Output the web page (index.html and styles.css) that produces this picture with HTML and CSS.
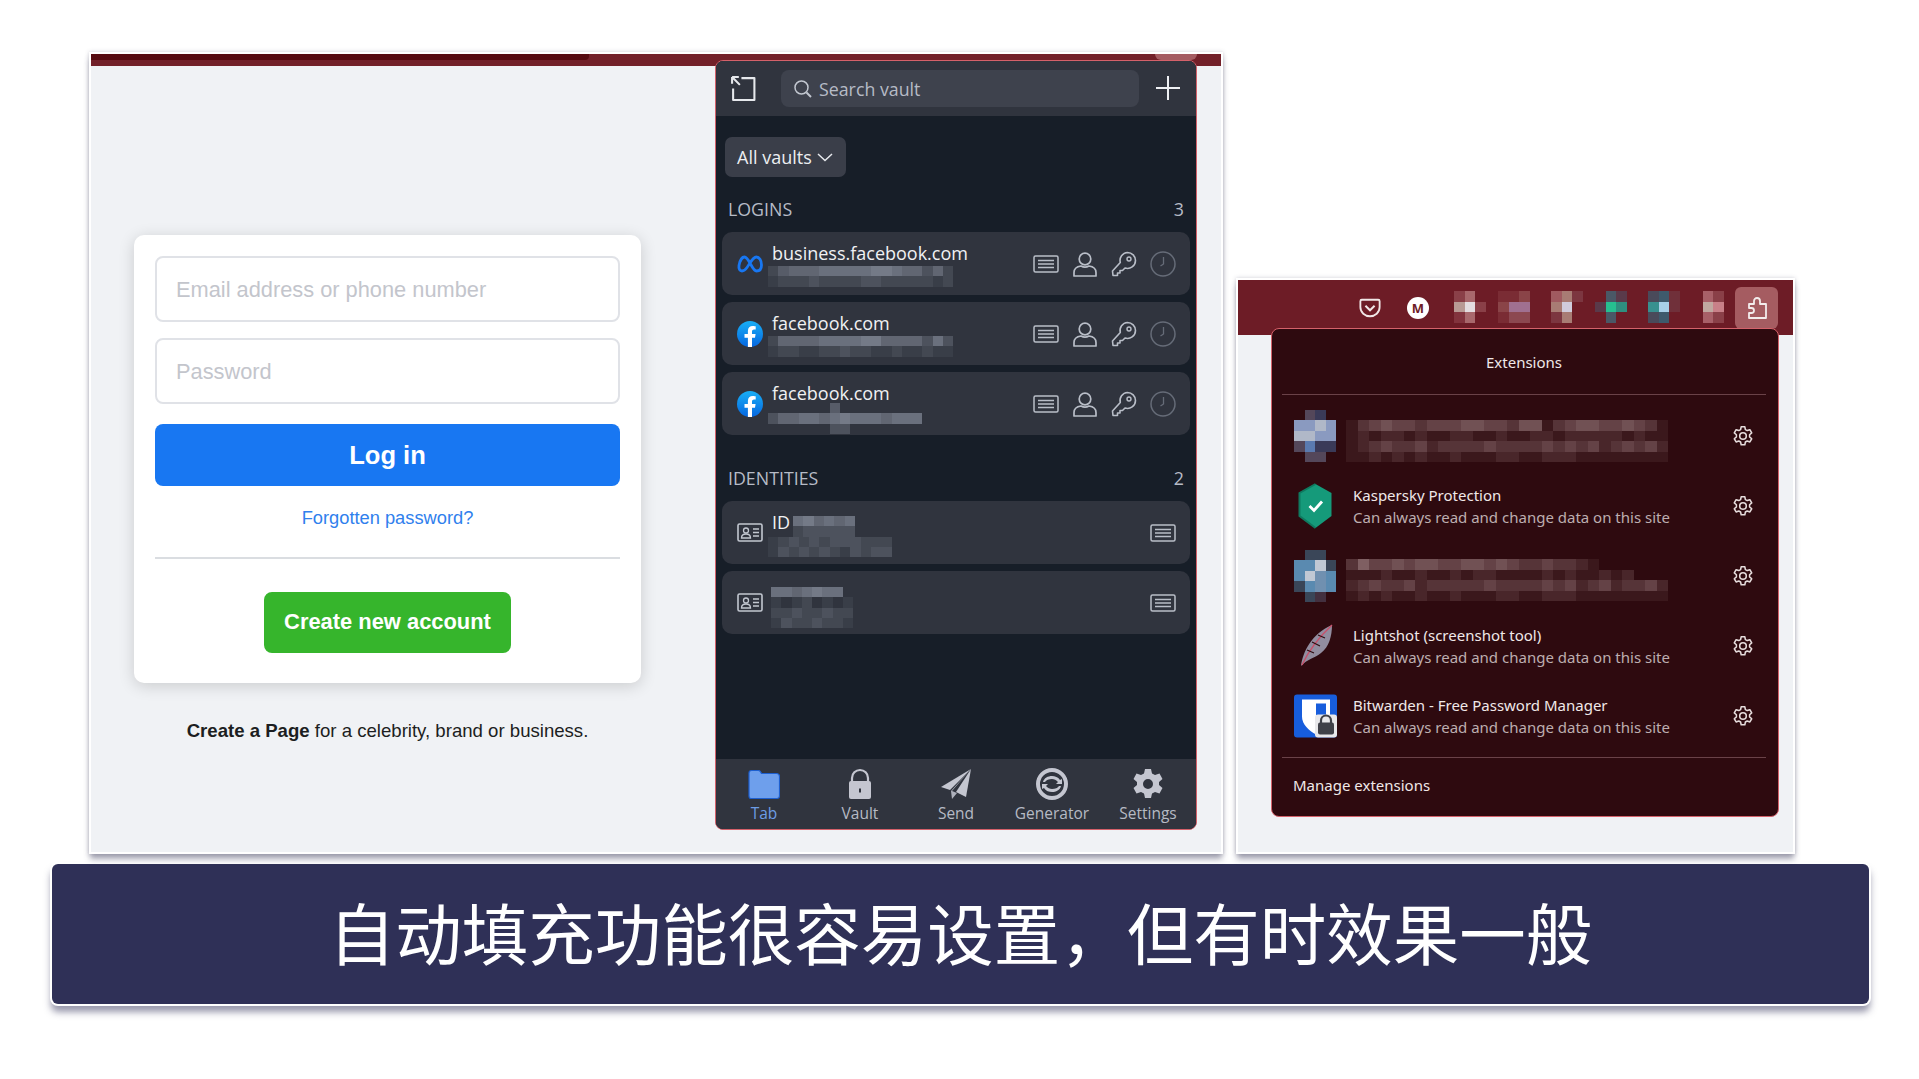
FILE: index.html
```html
<!DOCTYPE html>
<html lang="zh-CN">
<head>
    <meta charset="UTF-8">
    <meta name="viewport" content="width=device-width, initial-scale=1.0">
    <title>自动填充功能很容易设置&#xFF0C;但有时效果一般</title>
    <link rel="stylesheet" href="styles.css">
</head>
<body>
    <svg class="icon-defs" width="0" height="0" aria-hidden="true">
        <symbol id="i-view" viewBox="0 0 26 18"><rect x="1" y="1" width="24" height="16" rx="1.5" fill="none" stroke="currentColor" stroke-width="1.5"/><path d="M5 5.5h16M5 9h16M5 12.500h16" stroke="currentColor" stroke-width="1.300"/></symbol>
        <symbol id="i-user" viewBox="0 0 26 26"><circle cx="13" cy="8" r="5.800" fill="none" stroke="currentColor" stroke-width="1.700"/><path d="M2 25v-3.500c0-4 3.500-6 7-6.500 2.500 1.500 5.500 1.500 8 0 3.500.5 7 2.500 7 6.500V25z" fill="none" stroke="currentColor" stroke-width="1.700" stroke-linejoin="round"/></symbol>
        <symbol id="i-key" viewBox="0 0 26 26"><path d="M16.500 1.500a8 8 0 0 1 8 8 8 8 0 0 1-10.500 7.500l-2.500 2.500H9v2.500H6.500V24.500H2L1.500 20 9.300 11.500a8 8 0 0 1 7.200-10z" fill="none" stroke="currentColor" stroke-width="1.600" stroke-linejoin="round"/><circle cx="18" cy="8" r="2" fill="none" stroke="currentColor" stroke-width="1.400"/></symbol>
        <symbol id="i-clock" viewBox="0 0 26 26"><circle cx="13" cy="13" r="12" fill="none" stroke="currentColor" stroke-width="1.500"/><path d="M13.500 6v7l-3 2" fill="none" stroke="currentColor" stroke-width="1.300"/></symbol>
        <symbol id="i-id" viewBox="0 0 26 20"><rect x="1" y="1" width="24" height="17" rx="1.500" fill="none" stroke="currentColor" stroke-width="1.600"/><circle cx="9" cy="7.500" r="2.500" fill="none" stroke="currentColor" stroke-width="1.300"/><path d="M4.500 15c0-3 2-4 4.500-4s4.500 1 4.500 4zM16 6h6M16 9.500h6M16 13h6" fill="none" stroke="currentColor" stroke-width="1.300"/></symbol>
        <symbol id="i-fb" viewBox="0 0 26 26"><circle cx="13" cy="13" r="13" fill="url(#fb-blue)"/><path d="M18 16.800l.6-3.800h-3.600v-2.500c0-1 .5-2 2.100-2h1.600V5.300s-1.500-.3-2.900-.3c-3 0-4.900 1.800-4.900 5v3H7.500v3.800h3.400V26h4.100v-9.200z" fill="#fff"/></symbol>
        <symbol id="i-gear" viewBox="0 0 24 24"><path d="M10 2h4l.6 3 2 1.100 2.900-1 2 3.500-2.300 2 0 2.400 2.300 2-2 3.500-2.900-1-2 1.100-.6 3h-4l-.6-3-2-1.100-2.900 1-2-3.500 2.300-2 0-2.400-2.300-2 2-3.500 2.900 1 2-1.100z" fill="none" stroke="currentColor" stroke-width="1.700" stroke-linejoin="round"/><circle cx="12" cy="12" r="3.600" fill="none" stroke="currentColor" stroke-width="1.700"/></symbol>
        <linearGradient id="fb-blue" x1="0" y1="0" x2="0" y2="1"><stop offset="0" stop-color="#19aff5"/><stop offset="1" stop-color="#0566e0"/></linearGradient>
    </svg>

    <div class="shots">
        <!-- Fenêtre de gauche : page de connexion et coffre -->
        <section class="window window-login">
            <div class="tabstrip"><div class="tab-dark"></div><div class="tab-btn"></div></div>
            <div class="login-col">
                <div class="login-card">
                    <div class="field">Email address or phone number</div>
                    <div class="field">Password</div>
                    <div class="login-btn">Log in</div>
                    <div class="forgot">Forgotten password?</div>
                    <div class="login-sep"></div>
                    <div class="create-btn">Create new account</div>
                </div>
                <p class="create-page"><b>Create a Page</b> for a celebrity, brand or business.</p>
            </div>

            <div class="vault">
                <div class="vault-top">
                    <svg class="top-icon" viewBox="0 0 26 26"><path d="M11 3h12.500v21H3V13" fill="none" stroke="#e6e8ec" stroke-width="2" stroke-linejoin="round"/><path d="M2 2h6.500M2 2v6.500M2.500 2.500l7 7" fill="none" stroke="#e6e8ec" stroke-width="2"/></svg>
                    <div class="search">
                        <svg class="search-icon" viewBox="0 0 20 20"><circle cx="8.500" cy="8.500" r="6.500" fill="none" stroke="#c2c7d0" stroke-width="1.500"/><path d="M13.500 13.500l4.500 4.500" stroke="#c2c7d0" stroke-width="2"/></svg>
                        <span>Search vault</span>
                    </div>
                    <svg class="top-plus" viewBox="0 0 26 26"><path d="M13 1v24M1 13h24" stroke="#eef0f3" stroke-width="2"/></svg>
                </div>

                <div class="vault-body">
                    <div class="vault-filter">All vaults <svg viewBox="0 0 16 9"><path d="M1 1l7 6.500L15 1" fill="none" stroke="#e6e8ec" stroke-width="1.500"/></svg></div>

                    <div class="group-head"><span>LOGINS</span><span>3</span></div>
                    <div class="item">
                        <svg class="item-icon" viewBox="0 0 26 26"><path d="M2 14.500C3 9 5.500 6 7.500 6c4.500 0 7.500 14 12 14 2.800 0 5-2 5-6 0-4.500-2.200-8-5.200-8-3.500 0-6.800 7-9.300 10.500-1.500 2.200-3 3.500-5 3.500-2.200 0-3.500-2-3-5.500z" fill="none" stroke="#1877f2" stroke-width="2.800"/></svg>
                        <div class="item-text">
                            <div class="item-title">business.facebook.com</div>
                            <div class="mosaic mosaic-line" data-rows="245556666677655352|122232222332222212"></div>
                        </div>
                        <div class="item-actions">
                            <svg class="act"><use href="#i-view"/></svg>
                            <svg class="act"><use href="#i-user"/></svg>
                            <svg class="act"><use href="#i-key"/></svg>
                            <svg class="act act-dim"><use href="#i-clock"/></svg>
                        </div>
                    </div>
                    <div class="item">
                        <svg class="item-icon"><use href="#i-fb"/></svg>
                        <div class="item-text">
                            <div class="item-title">facebook.com</div>
                            <div class="mosaic mosaic-line" data-rows="255556666775555363|122112232211211211"></div>
                        </div>
                        <div class="item-actions">
                            <svg class="act"><use href="#i-view"/></svg>
                            <svg class="act"><use href="#i-user"/></svg>
                            <svg class="act"><use href="#i-key"/></svg>
                            <svg class="act act-dim"><use href="#i-clock"/></svg>
                        </div>
                    </div>
                    <div class="item">
                        <svg class="item-icon"><use href="#i-fb"/></svg>
                        <div class="item-text">
                            <div class="item-title">facebook.com</div>
                            <div class="mosaic mosaic-line mosaic-low" data-rows="      4|355665676665666|      33"></div>
                        </div>
                        <div class="item-actions">
                            <svg class="act"><use href="#i-view"/></svg>
                            <svg class="act"><use href="#i-user"/></svg>
                            <svg class="act"><use href="#i-key"/></svg>
                            <svg class="act act-dim"><use href="#i-clock"/></svg>
                        </div>
                    </div>

                    <div class="group-head group-second"><span>IDENTITIES</span><span>2</span></div>
                    <div class="item">
                        <svg class="item-icon item-icon-id"><use href="#i-id"/></svg>
                        <div class="item-text">
                            <div class="id-line">
                                <span class="item-title">ID</span>
                                <div class="mosaic mosaic-line mosaic-id" data-rows="675656|233333"></div>
                            </div>
                            <div class="mosaic mosaic-line" data-rows="123232333222|132323213233"></div>
                        </div>
                        <div class="item-actions"><svg class="act"><use href="#i-view"/></svg></div>
                    </div>
                    <div class="item">
                        <svg class="item-icon item-icon-id"><use href="#i-id"/></svg>
                        <div class="item-text">
                            <div class="mosaic mosaic-line mosaic-solo" data-rows="6656766|1 12 1 1|22322322|13223221"></div>
                        </div>
                        <div class="item-actions"><svg class="act"><use href="#i-view"/></svg></div>
                    </div>
                </div>

                <nav class="vault-nav">
                    <div class="nav-item nav-active">
                        <svg viewBox="0 0 32 30"><path d="M1 27V4c0-1.500.8-2.500 2.500-2.500h7c1.500 0 2 .5 3 3h15c1.800 0 3 1 3 3V27c0 1.500-1 2.500-2.500 2.500h-26C1.800 29.500 1 28.500 1 27z" fill="#6e9fec" stroke="#1d5fd0" stroke-width="1.200"/></svg>
                        <span>Tab</span>
                    </div>
                    <div class="nav-item">
                        <svg viewBox="0 0 32 32"><path d="M8 14V10a8 8 0 0 1 16 0v4" fill="none" stroke="#c4c6d0" stroke-width="2.200"/><rect x="5" y="13" width="22" height="18" rx="2" fill="#c4c6d0"/><path d="M16 20.500v4" stroke="#30343e" stroke-width="2"/></svg>
                        <span>Vault</span>
                    </div>
                    <div class="nav-item">
                        <svg viewBox="0 0 32 32"><path d="M31 1L1 19l9 3z" fill="#c4c6d0"/><path d="M31 1L12 23l5 2-5 6-1-8z" fill="#aeb1bc"/><path d="M31 1l-5 28-10-5z" fill="#c4c6d0"/></svg>
                        <span>Send</span>
                    </div>
                    <div class="nav-item">
                        <svg viewBox="0 0 32 32"><circle cx="16" cy="16" r="14" fill="none" stroke="#c4c6d0" stroke-width="4"/><path d="M7 14c1-4 5-6 9-6 3 0 6 1 8 4l2-1v5h-6l2-2c-1.500-2-4-3-6-3-3 0-6 1-7 3zM25 18c-1 4-5 6-9 6-3 0-6-1-8-4l-2 1v-5h6l-2 2c1.500 2 4 3 6 3 3 0 6-1 7-3z" fill="#c4c6d0"/></svg>
                        <span>Generator</span>
                    </div>
                    <div class="nav-item">
                        <svg viewBox="0 0 32 32"><path fill-rule="evenodd" d="M13 1h6l1 4.500 3 1.500 4.500-1.500 3 5.500-3.500 3v3l3.500 3-3 5.500-4.500-1.500-3 1.500-1 4.500h-6l-1-4.500-3-1.500-4.500 1.500-3-5.500 3.500-3v-3l-3.500-3 3-5.500L9 7l3-1.500zM16 11a5 5 0 1 0 0 10 5 5 0 0 0 0-10z" fill="#c4c6d0"/></svg>
                        <span>Settings</span>
                    </div>
                </nav>
            </div>
        </section>

        <!-- Fenêtre de droite : menu des extensions -->
        <section class="window window-ext">
            <div class="toolbar">
                <svg class="tool-icon" viewBox="0 0 24 24"><path d="M3 3h18c1 0 1.500.5 1.500 1.500V11c0 6-5 10-10.500 10S1.500 17 1.500 11V4.500C1.500 3.500 2 3 3 3z" fill="none" stroke="#f0e6e6" stroke-width="2"/><path d="M7 9.500l5 5 5-5" fill="none" stroke="#f0e6e6" stroke-width="2.200"/></svg>
                <div class="tool-m">M</div>
                <div class="mosaic mosaic-tool tool-first" data-colors="#8a4048,#a8686c,#b89a94,#e4dde0,#82333d" data-rows="ab |cda|eb "></div>
                <div class="mosaic mosaic-tool tool-near" data-colors="#7a2c34,#8a4448,#a07090,#a07088,#8c4850" data-rows="aab|bcc|aee"></div>
                <div class="mosaic mosaic-tool tool-far" data-colors="#a05a60,#a87c74,#d0ccdc,#c8a8a8,#7c3640" data-rows="abe|bc |eb "></div>
                <div class="mosaic mosaic-tool tool-near" data-colors="#7c3a46,#4a5866,#26c090,#2f8f7f,#5a3a4a" data-rows=" be|ecd| b "></div>
                <div class="mosaic mosaic-tool tool-far" data-colors="#4a4a5a,#3e5a6c,#a8d0e8,#38908f,#70303a" data-rows="abe|dce|ab "></div>
                <div class="mosaic mosaic-tool tool-near" data-colors="#a86068,#c0a8a0,#c88088,#8a4048" data-rows=" ad| bc| ad"></div>
                <div class="tool-puzzle">
                    <svg viewBox="0 0 24 24"><path d="M4 8h5V5a3 3 0 0 1 6 0v3h6v14H4v-5h2.500a2.500 2.500 0 0 0 0-5H4z" fill="none" stroke="#f3ecec" stroke-width="1.800" stroke-linejoin="round"/></svg>
                </div>
            </div>

            <div class="ext-menu">
                <div class="ext-title">Extensions</div>
                <div class="ext-sep"></div>
                <div class="ext-row">
                    <div class="mosaic mosaic-icon" data-colors="#54475a,#3a3a58,#8a9ac0,#b0b8c8,#5a7ab0,#4a5a80" data-rows=" ab |ccdc|ddcc|aebb| aa"></div>
                    <div class="mosaic mosaic-text" data-tint="226,200,200" data-rows="1345443444554435513455445431|1212212112211211221222221211|1234334233334333343434234342|1121212112111221122211111111"></div>
                    <svg class="ext-gear"><use href="#i-gear"/></svg>
                </div>
                <div class="ext-row">
                    <svg class="ext-icon" viewBox="0 0 43 48"><path d="M21.500 2l16 9v23l-16 12-16-12V11z" fill="#159a7a"/><path d="M21.500 2l-16 9v23l16 12" fill="none" stroke="#0f7a60" stroke-width="2"/><path d="M15.500 24l4.500 4.500 8-9" fill="none" stroke="#fff" stroke-width="2.800"/></svg>
                    <div class="ext-text">
                        <div class="ext-name">Kaspersky Protection</div>
                        <div class="ext-sub">Can always read and change data on this site</div>
                    </div>
                    <svg class="ext-gear"><use href="#i-gear"/></svg>
                </div>
                <div class="ext-row">
                    <div class="mosaic mosaic-icon" data-colors="#3a4658,#5a8ab0,#c0c8d4,#7090b0,#43303f" data-rows=" aa |bbca|bcdb|abdb| ae "></div>
                    <div class="mosaic mosaic-text mosaic-text-low" data-tint="226,200,200" data-rows="3644545544554543343321|1112112112122111121211212|2343342333334333343423423342|1212112112111221122211111111"></div>
                    <svg class="ext-gear"><use href="#i-gear"/></svg>
                </div>
                <div class="ext-row">
                    <svg class="ext-icon" viewBox="0 0 43 48"><path d="M7 44C9 30 17 12 38 3c0 11-3 22-11 28-6 5-14 6-20 13z" fill="#928d9f"/><path d="M8 43C14 30 24 16 38 3" fill="none" stroke="#c8506a" stroke-width="1.400"/><path d="M13 28l7 3M18 20l8 4M24 13l7 3" stroke="#2e0a0f" stroke-width="1.100"/></svg>
                    <div class="ext-text">
                        <div class="ext-name">Lightshot (screenshot tool)</div>
                        <div class="ext-sub">Can always read and change data on this site</div>
                    </div>
                    <svg class="ext-gear"><use href="#i-gear"/></svg>
                </div>
                <div class="ext-row">
                    <svg class="ext-icon" viewBox="0 0 43 43"><rect width="43" height="43" rx="3" fill="#175ddc"/><path d="M8 5h28v17c0 8-8 14-14 18C15 36 8 30 8 22z" fill="#fff"/><path d="M22 9h10v13c0 5-5 10-10 13z" fill="#175ddc"/><rect x="21" y="20" width="22" height="23" rx="3" fill="#e8e8ea"/><path d="M27 29v-3a5 5 0 0 1 10 0v3" fill="none" stroke="#3f4148" stroke-width="2.200"/><rect x="24" y="28" width="16" height="12" rx="2" fill="#3f4148"/></svg>
                    <div class="ext-text">
                        <div class="ext-name">Bitwarden - Free Password Manager</div>
                        <div class="ext-sub">Can always read and change data on this site</div>
                    </div>
                    <svg class="ext-gear"><use href="#i-gear"/></svg>
                </div>
                <div class="ext-sep ext-sep-low"></div>
                <div class="ext-manage">Manage extensions</div>
            </div>
        </section>
    </div>

    <div class="caption">自动填充功能很容易设置&#xFF0C;但有时效果一般</div>

    <script src="mosaic.js"></script>
</body>
</html>
```

FILE: styles.css
```css
* {
    box-sizing: border-box;
}
html, body {
    height: 100%;
}
body {
    margin: 0;
    background-color: #fff;
    font-family: "Open Sans", "Noto Sans CJK SC", sans-serif;
    color: #333;
}
.icon-defs {
    position: absolute;
}
.shots {
    display: flex;
    align-items: flex-start;
    gap: 17px;
    padding: 54px 0 0 91px;
}
.window {
    position: relative;
    height: 798px;
    background-color: #f0f2f5;
    box-shadow: 0 0 0 2px #fff, 0 0 4px 2px rgba(60, 60, 90, 0.25), 0 6px 6px 1px rgba(60, 60, 90, 0.45);
}

/* Pixels de floutage */
.mosaic {
    --cell-w: 10.300px;
    --cell-h: 10.300px;
    flex-shrink: 0;
}
.mosaic-line {
    margin-left: -3px;
}
.mosaic-row {
    display: flex;
    height: var(--cell-h);
}
.mosaic-row span {
    flex-shrink: 0;
    width: var(--cell-w);
}
.mosaic-low {
    margin-top: -3px;
}
.mosaic-id {
    margin: 8px 0 0 3px;
}
.mosaic-solo {
    margin: 9px 0 0;
}

/* Fenêtre de gauche */
.window-login {
    width: 1130px;
}
.tabstrip {
    position: relative;
    height: 12px;
    background-color: #722029;
}
.tab-dark {
    width: 498px;
    height: 6px;
    background-color: #560a10;
    border-bottom-right-radius: 4px;
}
.tab-btn {
    position: absolute;
    top: 0;
    right: 24px;
    width: 42px;
    height: 6px;
    background-color: #a45b61;
    border-radius: 0 0 6px 6px;
}
.login-col {
    width: 507px;
    margin: 169px 0 0 43px;
}
.login-card {
    display: flex;
    flex-direction: column;
    height: 448px;
    padding: 21px 21px 0;
    background-color: #fff;
    border-radius: 10px;
    box-shadow: 0 3px 16px rgba(0, 0, 0, 0.16);
}
.field {
    display: flex;
    align-items: center;
    height: 66px;
    margin-bottom: 16px;
    padding: 1px 0 0 19px;
    border: 2px solid #e0e2e7;
    border-radius: 8px;
    font-family: "Liberation Sans", Arial, sans-serif;
    font-size: 21.800px;
    color: #c3c5cc;
}
.login-btn {
    height: 62px;
    margin-top: 4px;
    line-height: 62px;
    text-align: center;
    background-color: #1877f2;
    border-radius: 8px;
    color: #fff;
    font-family: "Liberation Sans", Arial, sans-serif;
    font-size: 25.500px;
    font-weight: bold;
}
.forgot {
    margin-top: 21px;
    text-align: center;
    color: #2f80ed;
    font-family: "Liberation Sans", Arial, sans-serif;
    font-size: 18.300px;
    line-height: 22px;
}
.login-sep {
    height: 2px;
    margin-top: 28px;
    background-color: #dadde1;
}
.create-btn {
    align-self: center;
    width: 247px;
    height: 61px;
    margin-top: 33px;
    line-height: 59px;
    text-align: center;
    background-color: #36b52c;
    border-radius: 8px;
    color: #fff;
    font-family: "Liberation Sans", Arial, sans-serif;
    font-size: 21.900px;
    font-weight: bold;
}
.create-page {
    margin: 36px 0 0;
    text-align: center;
    font-family: "Liberation Sans", Arial, sans-serif;
    font-size: 18.600px;
    line-height: 24px;
    color: #1c1e21;
}

/* Coffre Bitwarden */
.vault {
    position: absolute;
    top: 6px;
    left: 624px;
    display: flex;
    flex-direction: column;
    width: 482px;
    height: 770px;
    background-color: #171e28;
    border: 1px solid #d4616a;
    border-radius: 8px;
    overflow: hidden;
}
.vault-top {
    display: flex;
    align-items: center;
    height: 55px;
    padding: 0 14px;
    background-color: #30343e;
}
.top-icon {
    width: 27px;
    height: 27px;
    flex-shrink: 0;
}
.search {
    display: flex;
    align-items: center;
    width: 358px;
    height: 37px;
    margin: 0 0 0 24px;
    padding-left: 12px;
    background-color: #3e424d;
    border-radius: 8px;
    color: #b6bbc6;
    font-size: 17.800px;
}
.search-icon {
    width: 20px;
    height: 20px;
    margin-right: 6px;
}
.top-plus {
    width: 26px;
    height: 26px;
    margin: -2px 0 0 16px;
}
.vault-body {
    flex: 1;
    padding: 21px 6px 0;
}
.vault-filter {
    display: flex;
    align-items: center;
    gap: 5px;
    width: 121px;
    height: 40px;
    margin-left: 3px;
    padding-left: 12px;
    background-color: #3a3e49;
    border-radius: 7px;
    color: #eceef1;
    font-size: 18px;
}
.vault-filter svg {
    width: 16px;
    height: 9px;
}
.group-head {
    display: flex;
    justify-content: space-between;
    height: 24px;
    margin: 20px 6px 11px 6px;
    color: #b6bbc6;
    font-size: 17.800px;
    line-height: 24px;
}
.group-second {
    margin-top: 31px;
}
.item {
    display: flex;
    align-items: center;
    height: 63px;
    margin-bottom: 7px;
    padding-left: 15px;
    background-color: #30343e;
    border-radius: 10px;
}
.item-icon {
    width: 26px;
    height: 26px;
    flex-shrink: 0;
}
.item-icon-id {
    color: #c2c7d0;
    height: 20px;
}
.item-text {
    flex: 1;
    align-self: flex-start;
    padding: 7px 0 0 8px;
}
.item-title {
    height: 27px;
    padding-left: 1px;
    color: #f0f1f3;
    font-size: 18px;
    line-height: 28px;
}
.id-line {
    display: flex;
}
.item-actions {
    display: flex;
    gap: 13px;
    padding-right: 14px;
    color: #b9bec8;
}
.act {
    width: 26px;
    height: 26px;
}
.act-dim {
    color: #666c78;
}
.vault-nav {
    display: grid;
    grid-template-columns: repeat(5, 1fr);
    height: 70px;
    padding-top: 9px;
    background-color: #30343e;
}
.nav-item {
    display: flex;
    flex-direction: column;
    align-items: center;
    color: #b6bac4;
    font-size: 15.500px;
    line-height: 20px;
}
.nav-item svg {
    width: 32px;
    height: 32px;
    margin-bottom: 3px;
}
.nav-active {
    color: #6d9de6;
}

/* Fenêtre de droite */
.window-ext {
    width: 555px;
    height: 572px;
    margin-top: 226px;
}
.toolbar {
    display: flex;
    align-items: center;
    height: 55px;
    padding-left: 121px;
    background-color: #6d1c26;
}
.tool-icon {
    width: 22px;
    height: 22px;
    margin-right: 26px;
}
.tool-m {
    width: 22px;
    height: 22px;
    text-align: center;
    background-color: #fff;
    border-radius: 50%;
    color: #6d1c26;
    font-size: 13px;
    font-weight: bold;
    line-height: 22px;
}
.mosaic-tool {
    width: 32px;
    margin-top: -1px;
    --cell-w: 10.700px;
    --cell-h: 10.700px;
}
.tool-first {
    margin-left: 25px;
}
.tool-near {
    margin-left: 12px;
}
.tool-far {
    margin-left: 21px;
}
.tool-puzzle {
    display: flex;
    align-items: center;
    justify-content: center;
    width: 43px;
    height: 42px;
    margin-left: 11px;
    background-color: #a55c61;
    border-radius: 6px;
}
.tool-puzzle svg {
    width: 24px;
    height: 24px;
}
.ext-menu {
    position: absolute;
    top: 48px;
    left: 33px;
    width: 508px;
    height: 489px;
    padding: 0 12px 0 10px;
    background-color: #2e0a0f;
    border: 1px solid #d4616a;
    border-radius: 8px;
    color: #f0e8e8;
}
.ext-title {
    height: 65px;
    line-height: 66px;
    text-align: center;
    font-family: "Noto Sans", sans-serif;
    font-size: 15px;
}
.ext-sep {
    height: 1px;
    margin-bottom: 6px;
    background-color: #6a4248;
}
.ext-sep-low {
    margin: 6px 0 0;
}
.ext-row {
    position: relative;
    display: flex;
    align-items: center;
    height: 70px;
    padding-left: 12px;
}
.ext-icon {
    width: 43px;
    height: 48px;
    flex-shrink: 0;
    margin-right: 16px;
}
.ext-row .mosaic-icon {
    flex-shrink: 0;
    width: 43px;
    margin-right: 9px;
    --cell-w: 10.500px;
    --cell-h: 10.500px;
}
.mosaic-text {
    margin-top: 10px;
    --cell-w: 11.500px;
    --cell-h: 10.500px;
}
.mosaic-text-low {
    margin-top: 8px;
}
.ext-text {
    line-height: 22px;
    font-family: "Noto Sans", sans-serif;
}
.ext-name {
    font-size: 15px;
}
.ext-sub {
    font-size: 15px;
    color: #bdaeb0;
}
.ext-gear {
    position: absolute;
    right: 12px;
    top: 23px;
    width: 22px;
    height: 24px;
    color: #e6dcdc;
}
.ext-manage {
    padding: 17px 0 0 11px;
    font-family: "Noto Sans", sans-serif;
    font-size: 15px;
    line-height: 20px;
}

/* Bandeau de légende */
.caption {
    width: 1817px;
    height: 140px;
    margin: 12px 0 0 52px;
    background-color: #2f3057;
    border-radius: 6px;
    box-shadow: 0 0 0 2px #fff, 0 7px 7px 1px rgba(50, 50, 90, 0.5);
    color: #fff;
    font-family: "Noto Sans CJK SC", sans-serif;
    font-size: 66.500px;
    line-height: 134px;
    text-align: center;
}
```

FILE: mosaic.js
```js
// Dessine les zones floutées : chaque ligne est une chaîne, un chiffre donne
// l'opacité de la teinte, une lettre renvoie à data-colors
document.querySelectorAll('.mosaic').forEach(function (box) {
    const tint = box.dataset.tint || '178,186,202';
    const colors = (box.dataset.colors || '').split(',');

    box.dataset.rows.split('|').forEach(function (line) {
        const row = document.createElement('div');
        row.className = 'mosaic-row';
        for (const c of line) {
            const cell = document.createElement('span');
            if (c >= '0' && c <= '9') {
                cell.style.backgroundColor = 'rgba(' + tint + ',' + (parseInt(c) * 0.075) + ')';
            } else if (c !== ' ') {
                cell.style.backgroundColor = colors[c.charCodeAt(0) - 97];
            }
            row.appendChild(cell);
        }
        box.appendChild(row);
    });
});
```
